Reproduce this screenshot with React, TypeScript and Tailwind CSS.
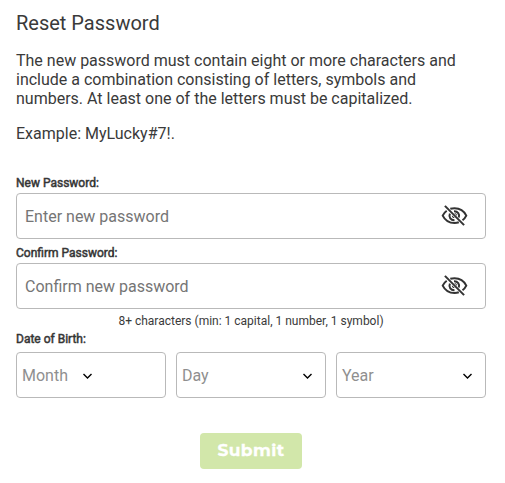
import { useState } from "react";

interface PasswordFieldProps {
  id: string;
  label: string;
  placeholder: string;
}

function EyeOffIcon() {
  return (
    <svg
      viewBox="0 0 28 24"
      className="h-6 w-7 fill-none stroke-[#333333] stroke-2"
    >
      <path d="M6.700 6.700C5 7.900 3.700 9.500 2.700 11.600c2.300 4.700 6.500 7.400 11.800 7.400 1.600 0 3-.2 4.300-.7" />
      <path d="M10.300 4.800c1.300-.4 2.700-.6 4.200-.6 5.300 0 9.500 2.700 11.800 7.400-.9 1.900-2.200 3.400-3.800 4.600" />
      <path d="M9.900 9.700c-1.500 3.500.9 6.600 4.600 6.500M14 7.200c3.700-.2 6 3.200 4.800 6.300" />
      <path
        d="M14.200 9c1.700 0 2.900 1.200 2.900 2.900zM11.900 11.200c-.3 1.800 1 3.100 2.900 2.900z"
        className="fill-[#333333] stroke-none"
      />
      <path d="M4.900 1.900l19.200 19.200" />
    </svg>
  );
}

function PasswordField({ id, label, placeholder }: PasswordFieldProps) {
  const [visible, setVisible] = useState(false);

  return (
    <div>
      <label
        htmlFor={id}
        className="block h-5 text-[12px] leading-5 [-webkit-text-stroke:0.5px_#333333]"
      >
        {label}
      </label>
      <div className="flex h-[46px] items-center rounded-[4px] border border-[#b9b9b9] pr-[17px] pl-2">
        <input
          id={id}
          type={visible ? "text" : "password"}
          placeholder={placeholder}
          className="min-w-0 flex-1 pt-px text-base outline-none placeholder:text-[#757575]"
        />
        <button
          type="button"
          aria-label="Toggle password visibility"
          onClick={() => setVisible(!visible)}
        >
          <EyeOffIcon />
        </button>
      </div>
    </div>
  );
}

function DateSelect({ label, wide }: { label: string; wide?: boolean }) {
  return (
    <button
      type="button"
      className="flex h-[46px] w-[150px] items-center rounded-[4px] border border-[#b9b9b9] pt-px pr-[13px] pl-[5px] text-base text-[#8f8f8f]"
    >
      <span className={wide ? "flex-1 text-left" : "w-[60px] text-left"}>
        {label}
      </span>
      <svg
        viewBox="0 0 10 6"
        className="h-[6px] w-[10px] fill-none stroke-black stroke-[1.4]"
      >
        <path d="M1.500 1l4 4 4-4" />
      </svg>
    </button>
  );
}

export default function ResetPassword() {
  return (
    <div className="min-h-screen bg-white px-4 pt-[10px] font-['Roboto',sans-serif] text-[#3a3a3a]">
      <form className="w-[470px]">
        <h1 className="text-[20px] leading-[26px]">Reset Password</h1>
        <p className="mt-[15px] text-base leading-[19px]">
          The new password must contain eight or more characters and
          <br />
          include a combination consisting of letters, symbols and
          <br />
          numbers. At least one of the letters must be capitalized.
        </p>
        <p className="mt-4 text-base leading-[19px]">Example: MyLucky#7!.</p>

        <div className="mt-[30px] flex flex-col gap-1">
          <PasswordField
            id="new-password"
            label="New Password:"
            placeholder="Enter new password"
          />
          <PasswordField
            id="confirm-password"
            label="Confirm Password:"
            placeholder="Confirm new password"
          />
        </div>

        <p className="mt-[3px] text-center text-[12px] leading-[18px]">
          8+ characters (min: 1 capital, 1 number, 1 symbol)
        </p>

        <div className="text-[12px] leading-[18px] [-webkit-text-stroke:0.5px_#333333]">
          Date of Birth:
        </div>
        <div className="mt-1 flex gap-[10px]">
          <DateSelect label="Month" />
          <DateSelect label="Day" wide />
          <DateSelect label="Year" wide />
        </div>

        <div className="mt-[35px] flex justify-center">
          <button
            type="submit"
            disabled
            className="h-9 w-[102px] rounded-[4px] bg-[#d2e7aa] font-['Montserrat','Open_Sans',sans-serif] text-[17px] font-bold tracking-[0.4px] text-white [-webkit-text-stroke:0.3px_white]"
          >
            Submit
          </button>
        </div>
      </form>
    </div>
  );
}
